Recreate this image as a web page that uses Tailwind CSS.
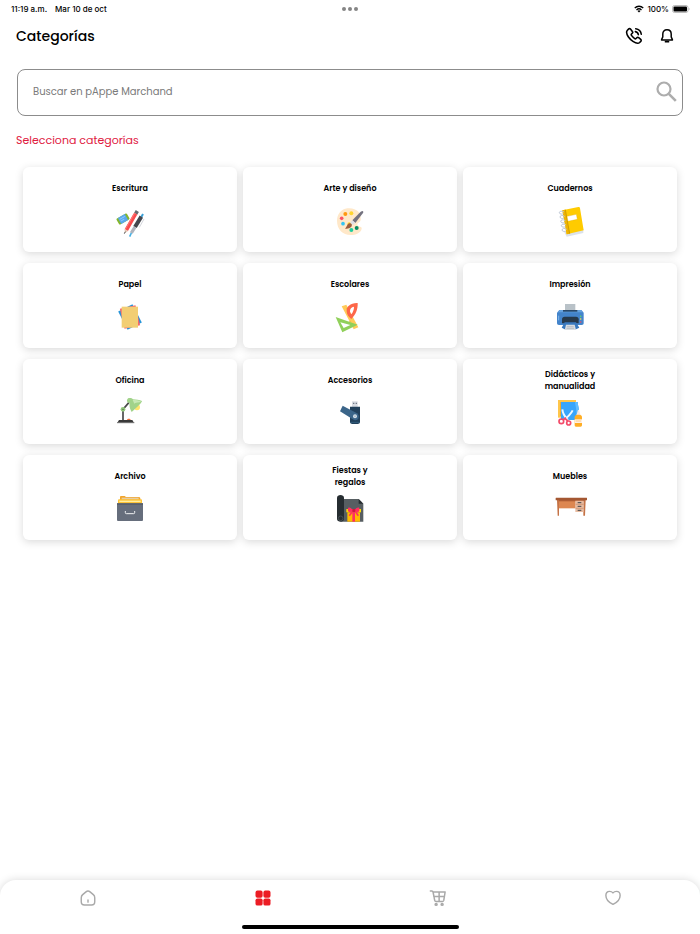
<!DOCTYPE html>
<html lang="es">
<head>
    <meta charset="UTF-8">
    <meta name="viewport" content="width=device-width, initial-scale=1.0">
    <title>Categorías</title>
    <script src="https://cdn.jsdelivr.net/npm/@tailwindcss/browser@4"></script>
</head>
<body class="min-h-screen flex flex-col bg-white text-black font-['Poppins','Inter',sans-serif]">

    <!-- Status bar -->
    <div class="grid grid-cols-3 items-center h-[17px] pl-[11px] pr-[10px] font-['Inter',sans-serif] text-[8px] font-medium">
        <div class="flex gap-2">
            <span>11:19 a.m.</span>
            <span>Mar 10 de oct</span>
        </div>
        <div class="flex justify-center gap-[2px]">
            <span class="size-1 rounded-full bg-[#858585]"></span>
            <span class="size-1 rounded-full bg-[#858585]"></span>
            <span class="size-1 rounded-full bg-[#858585]"></span>
        </div>
        <div class="flex items-center justify-end gap-[3px]">
            <svg class="w-[10px] h-2" viewBox="0 0 20 16" fill="none" stroke="#000" stroke-width="2.6">
                <path d="M1.500 6a12 12 0 0 1 17 0M5 10a7.200 7.200 0 0 1 10 0"/>
                <path d="M10 15l-3-3.200a4.400 4.400 0 0 1 6 0z" fill="#000" stroke="none"/>
            </svg>
            <span>100%</span>
            <svg class="w-[18px] h-2" viewBox="0 0 36 16">
                <rect x="1" y="1" width="31" height="14" rx="4" fill="#fff" stroke="#a6a6a6" stroke-width="1.500"/>
                <rect x="3" y="3" width="27" height="10" rx="2" fill="#000"/>
                <path d="M33.500 5.500c2 .5 2 4.500 0 5z" fill="#a6a6a6"/>
            </svg>
        </div>
    </div>

    <header class="flex items-center justify-between h-[38px] pl-4 pr-[25px]">
        <h1 class="text-[14px] font-medium">Categorías</h1>
        <div class="flex items-center gap-4">
            <button type="button" aria-label="Llamar">
                <svg class="size-[18px]" viewBox="0 0 24 24" fill="none" stroke="#000" stroke-width="2.100" stroke-linecap="round" stroke-linejoin="round">
                    <path d="M7.300 2.800c-.7-.8-1.800-.8-2.600 0L3.200 4.300C1.700 5.900 2 9.500 4.600 13.400c1.500 2.200 3.700 4.300 6 5.800 3.800 2.500 7.300 3 8.900 1.500l1.500-1.500c.8-.8.8-1.900 0-2.600l-2.800-2.300c-.8-.6-1.800-.6-2.500.1l-1 1c-.5.5-1.200.5-1.800.1-1.700-1.200-3.200-2.700-4.300-4.300-.4-.6-.4-1.300.1-1.800l1-1c.7-.7.8-1.700.1-2.500z"/>
                    <path d="M14.300 2.300c4.100.5 6.900 3.300 7.400 7.400M13.800 6.200c2.300.4 3.600 1.700 4 4"/>
                </svg>
            </button>
            <button type="button" aria-label="Notificaciones">
                <svg class="size-4" viewBox="0 0 24 24" fill="none" stroke="#000" stroke-width="2.200" stroke-linejoin="round">
                    <path d="M12 2.500c-4 0-6.300 2.700-6.300 6.500v4.300c0 1.300-1.900 3-1.900 4.800h16.400c0-1.800-1.900-3.500-1.900-4.800V9c0-3.800-2.300-6.500-6.300-6.500z"/>
                    <path d="M9.800 20.500h4.400" stroke-width="2.600" stroke-linecap="round"/>
                </svg>
            </button>
        </div>
    </header>

    <main class="flex-1 px-4 pt-[14px]">
        <form class="flex items-center h-[47px] mx-px rounded-lg border border-[#8c8c8c] pb-[2px] pl-[15px] pr-[5px]">
            <input type="search" aria-label="Buscar" placeholder="Buscar en pAppe Marchand" class="flex-1 min-w-0 text-[10px] text-black placeholder:text-[#7a7a7a] outline-none">
            <button type="submit" aria-label="Buscar">
                <svg class="size-[21px]" viewBox="0 0 21 21" fill="none" stroke="#adadad">
                    <circle cx="8" cy="8" r="6.500" stroke-width="2.200"/>
                    <path d="M12.800 12.800l7 7" stroke-width="2.600"/>
                </svg>
            </button>
        </form>

        <h2 class="mt-[15px] text-[11px] leading-[18px] text-[#e0203f]">Selecciona categorías</h2>

        <div class="grid grid-cols-3 gap-x-[6px] gap-y-[11px] mt-[18px] mx-[7px]">
            <a href="#escritura" class="flex flex-col items-center pt-[10px] pb-[14px] rounded-md bg-white shadow-[0_2px_9px_rgba(0,0,0,0.15)]">
                <span class="flex items-center max-w-16 h-6 text-center text-[8px] leading-3 font-semibold">Escritura</span>
                <svg class="mt-[5px] size-8" viewBox="0 0 96 96">
                    <g transform="rotate(-30 27 39)">
                        <rect x="9" y="29" width="36" height="20" rx="3" fill="#84b52b"/>
                        <rect x="15" y="29" width="24" height="20" fill="#5aa9ec"/>
                        <path d="M18 35h18M18 41h12" stroke="#8ccaff" stroke-width="3"/>
                    </g>
                    <path d="M70 15l-5 8" stroke="#676a70" stroke-width="11"/>
                    <path d="M65 23L37 72" stroke="#f94b4d" stroke-width="11"/>
                    <path d="M62 22L34 70" stroke="#ff7775" stroke-width="3"/>
                    <path d="M32 69l10 6-10 7z" fill="#e3c5b2"/>
                    <path d="M34 77l-3 6" stroke="#555" stroke-width="3"/>
                    <path d="M90 39L76 64" stroke="#d4d6dc" stroke-width="3"/>
                    <path d="M87 24l-5 9" stroke="#39a0d8" stroke-width="6"/>
                    <path d="M82 32L63 63" stroke="#44474e" stroke-width="12"/>
                    <path d="M63 63L52 81" stroke="#aeb3bc" stroke-width="10"/>
                    <path d="M52 81l-5 11" stroke="#4ab0e2" stroke-width="5"/>
                </svg>
            </a>
            <a href="#arte" class="flex flex-col items-center pt-[10px] pb-[14px] rounded-md bg-white shadow-[0_2px_9px_rgba(0,0,0,0.15)]">
                <span class="flex items-center max-w-16 h-6 text-center text-[8px] leading-3 font-semibold whitespace-nowrap">Arte y diseño</span>
                <svg class="mt-[5px] size-8" viewBox="0 0 96 96">
                    <path d="M40 7c26-3 43 13 40 34-2 11-13 8-9 17 3 6 13 2 12 10-2 12-18 19-33 19C26 87 9 70 9 44 9 24 22 9 40 7z" fill="#ffe8c9"/>
                    <circle cx="34" cy="24" r="6" fill="#ff9811"/>
                    <circle cx="52" cy="22" r="6" fill="#ffd52e"/>
                    <circle cx="23" cy="37" r="5.500" fill="#fb5367"/>
                    <circle cx="27" cy="53" r="5.500" fill="#32c5f4"/>
                    <circle cx="52" cy="72" r="6" fill="#20cf9d"/>
                    <circle cx="68" cy="66" r="6" fill="#078b62"/>
                    <circle cx="46" cy="55" r="6" fill="#ffd52e"/>
                    <path d="M85 15c3 0 4 3 2 6L64 51l-9-8 25-26z" fill="#74727f"/>
                    <path d="M55 43l9 8-8 6-8-7z" fill="#dedee5"/>
                    <path d="M47 52c5 0 8 4 6 9-3 6-12 8-20 7 6-4 5-14 14-16z" fill="#9b5c3e"/>
                </svg>
            </a>
            <a href="#cuadernos" class="flex flex-col items-center pt-[10px] pb-[14px] rounded-md bg-white shadow-[0_2px_9px_rgba(0,0,0,0.15)]">
                <span class="flex items-center max-w-16 h-6 text-center text-[8px] leading-3 font-semibold">Cuadernos</span>
                <svg class="mt-[5px] size-8" viewBox="0 0 96 96">
                    <path d="M31 78l7 14 50-11v-11z" fill="#dce2ea"/>
                    <path d="M25 13l48-10c3 0 5 1 5 4l11 66-51 12z" fill="#ffcb00"/>
                    <path d="M25 13l9-2 13 72-9 2z" fill="#efb400"/>
                    <path d="M34 11l13 72" stroke="#b88c00" stroke-width="2"/>
                    <path d="M39 31l28-6 3 15-28 6z" fill="#fff" stroke="#dfa900" stroke-width="1"/>
                    <g fill="none" stroke="#bcc6d4" stroke-width="3">
                        <path d="M30 18c-7-5-14-2-14 2s8 6 12 3"/>
                        <path d="M32 31c-7-5-14-2-14 2s8 6 12 3"/>
                        <path d="M34 44c-7-5-14-2-14 2s8 6 12 3"/>
                        <path d="M36 57c-7-5-14-2-14 2s8 6 12 3"/>
                        <path d="M38 70c-7-5-14-2-14 2s8 6 12 3"/>
                    </g>
                </svg>
            </a>
            <a href="#papel" class="flex flex-col items-center pt-[10px] pb-[14px] rounded-md bg-white shadow-[0_2px_9px_rgba(0,0,0,0.15)]">
                <span class="flex items-center max-w-16 h-6 text-center text-[8px] leading-3 font-semibold">Papel</span>
                <svg class="mt-[5px] size-8" viewBox="0 0 96 96">
                    <rect x="24" y="14" width="48" height="62" fill="#2795d9" transform="rotate(-27 48 45)"/>
                    <rect x="24" y="14" width="48" height="62" fill="#f5666b" transform="rotate(-13 48 45)"/>
                    <rect x="23" y="14" width="49" height="63" fill="#f2ce74"/>
                </svg>
            </a>
            <a href="#escolares" class="flex flex-col items-center pt-[10px] pb-[14px] rounded-md bg-white shadow-[0_2px_9px_rgba(0,0,0,0.15)]">
                <span class="flex items-center max-w-16 h-6 text-center text-[8px] leading-3 font-semibold">Escolares</span>
                <svg class="mt-[5px] size-8" viewBox="0 0 96 96">
                    <path d="M23 13l14-5 36 68-14 6z" fill="#ffcb58"/>
                    <path d="M37 20l5-2M40 27l7-3M44 60l6-2M48 68l7-3" stroke="#e5a936" stroke-width="2"/>
                    <path fill-rule="evenodd" d="M71 3C50 2 37 13 38 28c0 10 7 18 14 23C65 38 72 22 71 3zM60 14C52 15 48 20 48 27c0 5 1 7 4 10 5-7 8-14 8-23z" fill="#fd6749"/>
                    <path fill-rule="evenodd" d="M5 45l20 46 46-23zM19 61l10 17 20-9z" fill="#91d05b"/>
                </svg>
            </a>
            <a href="#impresion" class="flex flex-col items-center pt-[10px] pb-[14px] rounded-md bg-white shadow-[0_2px_9px_rgba(0,0,0,0.15)]">
                <span class="flex items-center max-w-16 h-6 text-center text-[8px] leading-3 font-semibold">Impresión</span>
                <svg class="mt-[5px] size-8" viewBox="0 0 96 96">
                    <path d="M33 6h31v24H33z" fill="#b9c2c8"/>
                    <path d="M16 24h66l7 8v31c0 4-2 6-6 6H15c-4 0-6-2-6-6V32z" fill="#4384cb"/>
                    <path d="M17 24h64l6 7H11z" fill="#65a2df"/>
                    <path d="M27 24h43v5H27z" fill="#27486b"/>
                    <path d="M24 64V52c0-5 3-8 8-8h34c5 0 8 3 8 8v12z" fill="#26394b"/>
                    <path d="M32 61h34l10 16-10 5H32l-9-5z" fill="#3979be"/>
                    <path d="M36 68h26l4 16H32z" fill="#d8dde1"/>
                    <path d="M39 74h20M38 79h22" stroke="#a7afb6" stroke-width="2"/>
                    <path d="M14 41v14" stroke="#80b6ea" stroke-width="3"/>
                    <circle cx="80" cy="43" r="2.500" fill="#64d565"/>
                    <circle cx="80" cy="51" r="2.500" fill="#ffdb51"/>
                    <circle cx="80" cy="60" r="2.500" fill="#ed4e62"/>
                </svg>
            </a>
            <a href="#oficina" class="flex flex-col items-center pt-[10px] pb-[14px] rounded-md bg-white shadow-[0_2px_9px_rgba(0,0,0,0.15)]">
                <span class="flex items-center max-w-16 h-6 text-center text-[8px] leading-3 font-semibold">Oficina</span>
                <svg class="mt-[5px] size-8" viewBox="0 0 96 96">
                    <path d="M27 67V34l20-23" fill="none" stroke="#494949" stroke-width="5"/>
                    <circle cx="69" cy="28" r="9" fill="#ffe66e"/>
                    <path d="M41 2c4-4 12-3 16 2 9 1 20 1 27 5-2 7-11 15-31 33-5-9-8-18-6-27-7 1-11-7-6-13z" fill="#a1d38a"/>
                    <path d="M56 6c10 0 18 1 25 4-4 6-12 1-20 7z" fill="#c7e9b6"/>
                    <circle cx="27" cy="34" r="7" fill="#92c87b"/>
                    <circle cx="27" cy="34" r="2" fill="#455345"/>
                    <path d="M39 66c0-5 11-5 11 0z" fill="#f36b3b"/>
                    <path d="M15 66h40l4 7H11z" fill="#393939"/>
                    <path d="M9 74h52" stroke="#242424" stroke-width="2"/>
                </svg>
            </a>
            <a href="#accesorios" class="flex flex-col items-center pt-[10px] pb-[14px] rounded-md bg-white shadow-[0_2px_9px_rgba(0,0,0,0.15)]">
                <span class="flex items-center max-w-16 h-6 text-center text-[8px] leading-3 font-semibold">Accesorios</span>
                <svg class="mt-[5px] size-8" viewBox="0 0 96 96">
                    <path d="M54 10h17v17H54z" fill="#d8dce3"/>
                    <path d="M57 14h4v4h-4zM65 14h4v4h-4z" fill="#717985"/>
                    <path d="M48 26h30v46c0 4-3 6-7 6H55c-4 0-7-2-7-6z" fill="#21405b"/>
                    <path d="M50 73h26" stroke="#3c6c8e" stroke-width="2"/>
                    <path d="M26 23l43 23c11 8 4 25-9 20L18 40z" fill="#3b6589"/>
                    <circle cx="63" cy="55" r="6" fill="#d2dee8"/>
                    <path d="M60 52l6 6M66 52l-6 6" stroke="#9badbb" stroke-width="2"/>
                </svg>
            </a>
            <a href="#didacticos" class="flex flex-col items-center pt-[10px] pb-[14px] rounded-md bg-white shadow-[0_2px_9px_rgba(0,0,0,0.15)]">
                <span class="flex items-center max-w-16 h-6 text-center text-[8px] leading-3 font-semibold">Didácticos y manualidad</span>
                <svg class="mt-[5px] size-8" viewBox="0 0 96 96">
                    <path d="M12 6h54v53H12z" fill="#ffc64b"/>
                    <path d="M18 12h45v42H18z" fill="#edaa31"/>
                    <path d="M21 12h51c-2 11 5 19 3 30-1 8-5 17-4 24H21z" fill="#38a5fb"/>
                    <path d="M63 12h9c-2 11 5 19 3 30-1 8-5 17-4 24h-7c7-18 2-34-1-54z" fill="#62bdff"/>
                    <path d="M25 34c1 13 6 21 17 32M56 37c-6 12-15 20-27 29" fill="none" stroke="#eef7ff" stroke-width="6"/>
                    <g fill="none" stroke="#f34b69" stroke-width="5">
                        <circle cx="22" cy="70" r="7"/>
                        <circle cx="44" cy="75" r="6"/>
                        <path d="M27 66l9-7M32 61l10 8"/>
                    </g>
                    <path d="M72 36h3l5 16H67z" fill="#f7e7e1"/>
                    <path d="M62 58c0-5 4-8 8-8h6c5 0 8 3 8 8v23c0 3-2 5-4 5H66c-3 0-4-2-4-5z" fill="#ffae25"/>
                    <path d="M62 64h22v11H62z" fill="#fff0e4"/>
                    <path d="M65 69h16" stroke="#ffbd5b" stroke-width="2"/>
                </svg>
            </a>
            <a href="#archivo" class="flex flex-col items-center pt-[10px] pb-[14px] rounded-md bg-white shadow-[0_2px_9px_rgba(0,0,0,0.15)]">
                <span class="flex items-center max-w-16 h-6 text-center text-[8px] leading-3 font-semibold">Archivo</span>
                <svg class="mt-[5px] size-8" viewBox="0 0 96 96">
                    <path d="M18 24V10c0-3 1-4 4-4h10l4 3h40l3 3v14z" fill="#f2a52b"/>
                    <path d="M23 11h51v6H23z" fill="#e6cda4"/>
                    <path d="M12 29V19c0-2 2-3 4-3h64c3 0 4 1 4 4v9z" fill="#ffc437"/>
                    <path d="M16 22h64" stroke="#fff0a1" stroke-width="4"/>
                    <path d="M9 28h78v50c0 2-1 3-3 3H12c-2 0-3-1-3-3z" fill="#666e7c"/>
                    <path d="M9 28h78v4H9z" fill="#525a66"/>
                    <path d="M34 51v5c0 2 1 3 3 3h22c2 0 3-1 3-3v-5" fill="none" stroke="#f0f2f4" stroke-width="3"/>
                </svg>
            </a>
            <a href="#fiestas" class="flex flex-col items-center pt-[10px] pb-[14px] rounded-md bg-white shadow-[0_2px_9px_rgba(0,0,0,0.15)]">
                <span class="flex items-center max-w-12 h-6 text-center text-[8px] leading-3 font-semibold">Fiestas y regalos</span>
                <svg class="mt-[5px] size-8" viewBox="0 0 96 96">
                    <path d="M25 15h49l14 14v54H20z" fill="#575e62"/>
                    <path d="M74 15l14 14H74z" fill="#262d31"/>
                    <path d="M9 11c0-11 21-11 21 0v64c0 11-21 11-21 0z" fill="#262d31"/>
                    <circle cx="20" cy="73" r="7" fill="none" stroke="#454e53" stroke-width="3"/>
                    <path d="M37 45h44v10H37z" fill="#ffda00"/>
                    <path d="M40 55h38v28H40z" fill="#ffba00"/>
                    <path d="M55 45h8v38h-8z" fill="#ff2e61"/>
                    <path d="M58 50c-8-12-17-12-16-5-2 6 3 15 16 5zM60 50c8-12 17-12 16-5 2 6-3 15-16 5z" fill="#ff2e61"/>
                    <path d="M55 45h9v9h-9z" fill="#cf1741"/>
                    <path d="M54 54l-8 11M65 54l8 11" stroke="#ff2e61" stroke-width="5"/>
                </svg>
            </a>
            <a href="#muebles" class="flex flex-col items-center pt-[10px] pb-[14px] rounded-md bg-white shadow-[0_2px_9px_rgba(0,0,0,0.15)]">
                <span class="flex items-center max-w-16 h-6 text-center text-[8px] leading-3 font-semibold">Muebles</span>
                <svg class="mt-[5px] size-8 overflow-visible" viewBox="0 0 96 96">
                    <path d="M9 18h6v47h-4zM88 18h7l-2 47h-5z" fill="#c57346"/>
                    <path d="M15 18h50v25H15z" fill="#dd8751"/>
                    <path d="M15 18h76v4H15z" fill="#b15e36"/>
                    <path d="M64 20h25v34H64z" fill="#e8bca1"/>
                    <path d="M65 31h24M65 43h24" stroke="#c78968" stroke-width="2"/>
                    <path d="M71 26h11M71 37h11M71 49h11" stroke="#414348" stroke-width="3"/>
                    <rect x="5" y="11" width="94" height="8" rx="1" fill="#a45732"/>
                </svg>
            </a>
        </div>
    </main>

    <!-- Bottom navigation -->
    <footer class="rounded-t-2xl bg-white shadow-[0_0_8px_rgba(0,0,0,0.15)]">
        <nav class="grid grid-cols-4 h-9">
            <a href="#inicio" aria-label="Inicio" class="flex items-center justify-center">
                <svg class="size-[18px]" viewBox="0 0 24 24" fill="none" stroke="#a9a9a9" stroke-width="1.900" stroke-linecap="round" stroke-linejoin="round">
                    <path d="M3 11.500c0-2 .4-2.700 1.900-4L9.300 3.800c2-1.700 3.400-1.700 5.400 0l4.400 3.700c1.500 1.300 1.900 2 1.900 4V17c0 3.300-1 4.300-4.300 4.300H7.300C4 21.300 3 20.300 3 17zM12 17.500v-3"/>
                </svg>
            </a>
            <a href="#categorias" aria-label="Categorías" aria-current="page" class="flex items-center justify-center">
                <svg class="size-[18px]" viewBox="0 0 24 24" fill="#ec1c24">
                    <rect x="2" y="2" width="9.500" height="9.500" rx="2.500"/>
                    <rect x="12.500" y="2" width="9.500" height="9.500" rx="2.500"/>
                    <rect x="2" y="12.500" width="9.500" height="9.500" rx="2.500"/>
                    <rect x="12.500" y="12.500" width="9.500" height="9.500" rx="2.500"/>
                </svg>
            </a>
            <a href="#carrito" aria-label="Carrito" class="flex items-center justify-center">
                <svg class="size-[18px]" viewBox="0 0 24 24" fill="none" stroke="#a9a9a9" stroke-width="2" stroke-linecap="round" stroke-linejoin="round">
                    <path d="M1.800 2.500h2c1 0 1.400.6 1.600 1.500l2.200 11.200c.2 1 .8 1.500 1.800 1.500h8.400c1 0 1.600-.5 1.900-1.500L21.500 4H5.500M6.400 10h14M13.500 4v12.500"/>
                    <circle cx="9.500" cy="20.500" r="1.300"/>
                    <circle cx="17.500" cy="20.500" r="1.300"/>
                </svg>
            </a>
            <a href="#favoritos" aria-label="Favoritos" class="flex items-center justify-center">
                <svg class="size-[18px]" viewBox="0 0 24 24" fill="none" stroke="#a9a9a9" stroke-width="1.900" stroke-linejoin="round">
                    <path d="M12 5.200C10.800 3.800 9.200 3.200 7.400 3.200 4.300 3.200 2.500 5.600 2.500 8.500c0 5 4.800 9.700 9.500 12 4.700-2.300 9.500-7 9.500-12 0-2.900-1.800-5.300-4.900-5.300-1.800 0-3.400.6-4.600 2z"/>
                </svg>
            </a>
        </nav>
        <div class="flex justify-center pt-[9px] pb-[5px]">
            <div class="w-[31%] h-1 rounded-full bg-black"></div>
        </div>
    </footer>
</body>
</html>
